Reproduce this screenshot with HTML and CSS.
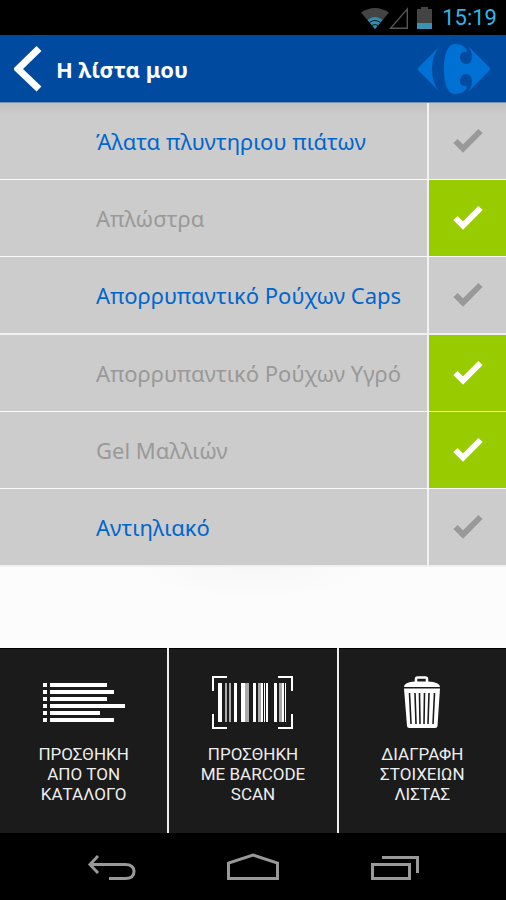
FILE: index.html
```html
<!DOCTYPE html>
<html lang="el">
<head>
<meta charset="utf-8">
<meta name="viewport" content="width=device-width, initial-scale=1">
<title>Η λίστα μου</title>
<link rel="stylesheet" href="styles.css">
</head>
<body>
<div class="status">
  <svg class="wifi" width="28" height="22" viewBox="0 0 28 22" aria-hidden="true">
    <path d="M0 5.500Q14-3.500 28 5.500L14 22Z" fill="#444"/>
    <path d="M6.500 13Q14 7 21.500 13L14 22Z" fill="#2f8fb5"/>
    <path d="M8.500 15.500Q14 11.500 19.500 15.500M11 18.500Q14 16.500 17 18.500" fill="none" stroke="#111" stroke-width="1"/>
  </svg>
  <svg class="signal" width="20" height="22" viewBox="0 0 20 22" aria-hidden="true">
    <path d="M1.500 21.300H18.300V2Z" fill="none" stroke="#555" stroke-width="1.400"/>
  </svg>
  <svg class="battery" width="15" height="22" viewBox="0 0 15 22" aria-hidden="true">
    <path d="M4 0H11V2H15V16H0V2H4Z" fill="#444"/>
    <path d="M0 16H15V22H0Z" fill="#3a93b5"/>
  </svg>
  <time class="clock">15:19</time>
</div>

<header class="header">
  <button class="back" type="button" aria-label="Πίσω">
    <svg width="28" height="48" viewBox="0 0 28 48" aria-hidden="true">
      <path d="M25 3.500L4 24L25 44" fill="none" stroke="#fff" stroke-width="7"/>
    </svg>
  </button>
  <h1 class="title">Η λίστα μου</h1>
  <svg class="logo" width="74" height="52" viewBox="0 0 74 52" aria-label="Carrefour" role="img">
    <path d="M23 3L1.500 24.500Q0 26 1.500 27.500L23 49Q15 41 15 26T23 3Z"/>
    <path d="M38 1C30 1 27 13 27 26S30 51 38 51C45 51 50 47 50 43C45 44 43 41 43 38C43 34 46 31 49 31C53 31 55 34 55 38C55 43 53 46 51 49L72.500 27.500Q74 26 72.500 24.500L51 3C53 6 55 9 55 14C55 18 53 21 49 21C46 21 43 18 43 14C43 11 45 8 50 9C50 5 45 1 38 1Z"/>
  </svg>
</header>

<main class="content">
  <ul class="list">
    <li class="row">
      <label class="name" for="i1">Άλατα πλυντηριου πιάτων</label>
      <div class="tick"><input id="i1" type="checkbox"><svg width="32" height="28" viewBox="0 0 32 28" aria-hidden="true"><path d="M3.500 14L11 21.500L28.500 4"/></svg></div>
    </li>
    <li class="row">
      <label class="name" for="i2">Απλώστρα</label>
      <div class="tick"><input id="i2" type="checkbox" checked><svg width="32" height="28" viewBox="0 0 32 28" aria-hidden="true"><path d="M3.500 14L11 21.500L28.500 4"/></svg></div>
    </li>
    <li class="row">
      <label class="name" for="i3">Απορρυπαντικό Ρούχων Caps</label>
      <div class="tick"><input id="i3" type="checkbox"><svg width="32" height="28" viewBox="0 0 32 28" aria-hidden="true"><path d="M3.500 14L11 21.500L28.500 4"/></svg></div>
    </li>
    <li class="row">
      <label class="name" for="i4">Απορρυπαντικό Ρούχων Υγρό</label>
      <div class="tick"><input id="i4" type="checkbox" checked><svg width="32" height="28" viewBox="0 0 32 28" aria-hidden="true"><path d="M3.500 14L11 21.500L28.500 4"/></svg></div>
    </li>
    <li class="row">
      <label class="name" for="i5">Gel Μαλλιών</label>
      <div class="tick"><input id="i5" type="checkbox" checked><svg width="32" height="28" viewBox="0 0 32 28" aria-hidden="true"><path d="M3.500 14L11 21.500L28.500 4"/></svg></div>
    </li>
    <li class="row">
      <label class="name" for="i6">Αντιηλιακό</label>
      <div class="tick"><input id="i6" type="checkbox"><svg width="32" height="28" viewBox="0 0 32 28" aria-hidden="true"><path d="M3.500 14L11 21.500L28.500 4"/></svg></div>
    </li>
  </ul>
</main>

<div class="actions">
  <button class="action" type="button">
    <svg width="84" height="54" viewBox="0 0 84 54" fill="#fff" aria-hidden="true">
      <path d="M1 7h4v4H1zM1 14h4v4H1zM1 21h4v4H1zM1 28h4v4H1zM1 35h4v4H1zM1 42h4v4H1z"/>
      <path d="M8 7h57v4H8zM8 14h64v4H8zM8 21h57v4H8zM8 28h75v4H8zM8 35h50v4H8zM8 42h64v4H8z"/>
    </svg>
    <span>ΠΡΟΣΘΗΚΗ<br>ΑΠΟ ΤΟΝ<br>ΚΑΤΑΛΟΓΟ</span>
  </button>
  <button class="action" type="button">
    <svg width="84" height="54" viewBox="0 0 84 54" fill="#fff" aria-hidden="true">
      <path d="M2 15V1H16M67 1H81V15M81 38V52H67M16 52H2V38" fill="none" stroke="#fff" stroke-width="2"/>
      <path d="M7 7h4v39H7zM23 7h3v39h-3zM30 7h4v39h-4zM42 7h3v39h-3zM55 7h2v39h-2zM63 7h3v39h-3zM71 7h2v39h-2z"/>
      <path d="M14 7h2v39h-2zM18 7h2v39h-2zM34 7h4v39h-4zM47 7h3v39h-3zM68 7h3v39h-3z" fill="#aaa"/>
      <path d="M50 7h2v39h-2zM53 7h1v39h-1zM74 7h1v39h-1z"/>
    </svg>
    <span>ΠΡΟΣΘΗΚΗ<br>ΜΕ BARCODE<br>SCAN</span>
  </button>
  <button class="action" type="button">
    <svg width="38" height="54" viewBox="0 0 38 54" aria-hidden="true">
      <path d="M13 6V3Q13 1.500 14.500 1.500H22.500Q24 1.500 24 3V6" fill="none" stroke="#fff" stroke-width="2.500"/>
      <path d="M1 11Q1 6 12 5.500H25Q37 6 37 11ZM1 12.500H37L34.500 50Q34.500 52 32 52H6.500Q4 52 4 50Z" fill="#fff"/>
      <path d="M6.500 17L8 48M12 17L13 48M16.500 17L17 48M21.500 17L21 48M26 17L25 48M31.500 17L30 48" stroke="#1b1b1b" stroke-width="1.600"/>
    </svg>
    <span>ΔΙΑΓΡΑΦΗ<br>ΣΤΟΙΧΕΙΩΝ<br>ΛΙΣΤΑΣ</span>
  </button>
</div>

<nav class="navbar" aria-label="Σύστημα">
  <button type="button" aria-label="Πίσω">
    <svg width="52" height="28" viewBox="0 0 52 28" aria-hidden="true"><path d="M12 3L4 11.500L12 20M4 11.500H39Q48 11.500 48 18.500T39 25.500H23"/></svg>
  </button>
  <button type="button" aria-label="Αρχική">
    <svg width="52" height="28" viewBox="0 0 52 28" aria-hidden="true"><path d="M1.500 25.500V10L26 2L50.500 10V25.500Z"/></svg>
  </button>
  <button type="button" aria-label="Πρόσφατα">
    <svg width="52" height="28" viewBox="0 0 52 28" aria-hidden="true"><path d="M4.500 11.500H41.500V25.500H4.500ZM14 4.500H49.500V20"/></svg>
  </button>
</nav>
</body>
</html>
```

FILE: styles.css
```css
* {
  box-sizing: border-box;
}

body {
  margin: 0;
  min-height: 100vh;
  display: flex;
  flex-direction: column;
  background: #fcfcfc;
  font-family: Roboto, "Liberation Sans", sans-serif;
}

button {
  border: 0;
  padding: 0;
  background: none;
  color: inherit;
  font: inherit;
}

svg {
  display: block;
  flex: none;
}

.status {
  height: 35px;
  padding-right: 9px;
  display: flex;
  align-items: center;
  justify-content: flex-end;
  background: #000;
}

.battery {
  margin: 0 10px 0 8px;
}

.clock {
  font-size: 22px;
  color: #33b5e5;
}

.header {
  height: 68px;
  padding: 0 15px 0 14px;
  display: flex;
  align-items: center;
  background: #004b9f;
  border-bottom: 1px solid #7890b4;
}

.title {
  flex: 1;
  margin: 0 0 0 14px;
  font: bold 22px/32px "Noto Sans", sans-serif;
  color: #fff;
}

.logo {
  fill: #0071d4;
}

.content {
  flex: 1;
  background: radial-gradient(ellipse 120px 32px at 50% 464px, #f7f7f7, #fcfcfc);
}

.list {
  margin: 0;
  padding: 0;
  list-style: none;
  background: linear-gradient(#c2c2c2, #ccc 12px);
}

.row {
  min-height: 77px;
  display: flex;
  border-bottom: 1px solid #fafafa;
}

.row:nth-child(3n) {
  min-height: 78px;
  border-bottom: 2px solid #f0f0f0;
}

.name {
  flex: 1;
  padding-left: 96px;
  display: flex;
  align-items: center;
  font: 22px/30px "Noto Sans", sans-serif;
  color: #0066cc;
}

.row:has(:checked) .name {
  color: #999;
}

.tick {
  width: 79px;
  border-left: 2px solid #f2f2f2;
  display: grid;
}

.tick input {
  grid-area: 1 / 1;
  appearance: none;
  margin: 0;
}

.tick input:checked {
  background: #99cc00;
}

.tick svg {
  grid-area: 1 / 1;
  place-self: center;
  pointer-events: none;
  fill: none;
  stroke: #999;
  stroke-width: 6;
}

.tick input:checked + svg {
  stroke: #fff;
}

.actions {
  display: grid;
  grid-template-columns: repeat(3, 1fr);
  gap: 2px;
  background: #eee;
}

.action {
  min-height: 185px;
  padding-top: 27px;
  display: flex;
  flex-direction: column;
  align-items: center;
  gap: 14px;
  background: #1b1b1b;
  border-top: 1px solid #000;
  color: #eee;
  font-size: 17px;
  line-height: 20px;
}

.navbar {
  height: 67px;
  padding: 0 42px;
  display: grid;
  grid-template-columns: repeat(3, 1fr);
  background: #000;
}

.navbar button {
  display: grid;
  place-items: center;
}

.navbar svg {
  fill: none;
  stroke: #999;
  stroke-width: 3;
}
```
